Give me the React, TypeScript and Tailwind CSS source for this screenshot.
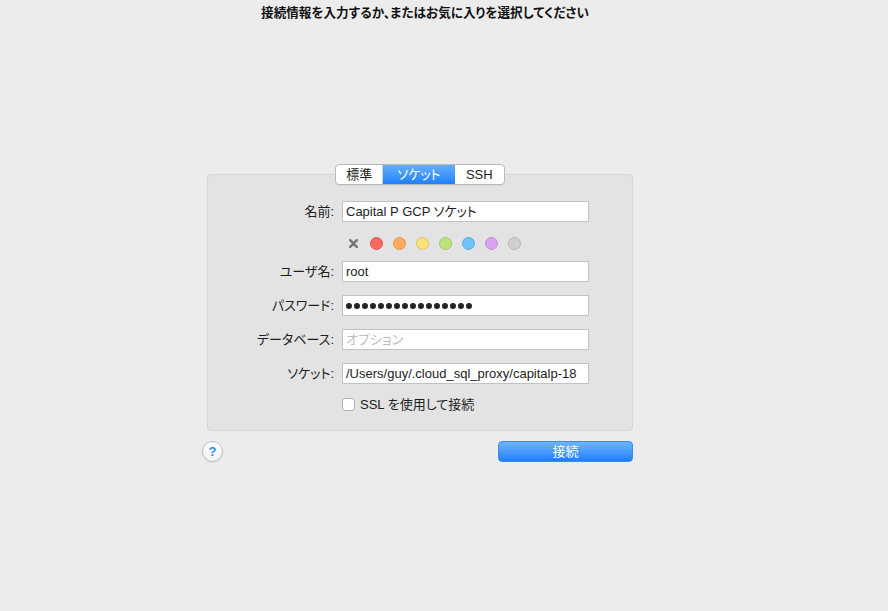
import { useState } from "react";

const FONT = "[font-family:'Liberation_Sans','Noto_Sans_CJK_JP',sans-serif] [font-feature-settings:'palt']";

const favColors = [
  { fill: "bg-[#f86a5f]", ring: "border-[#de554b]" },
  { fill: "bg-[#fdab5e]", ring: "border-[#e3944c]" },
  { fill: "bg-[#fbe27b]", ring: "border-[#dcc563]" },
  { fill: "bg-[#bce37c]", ring: "border-[#a0c766]" },
  { fill: "bg-[#6fc4fb]", ring: "border-[#55abe2]" },
  { fill: "bg-[#daa4f1]", ring: "border-[#c08bd7]" },
  { fill: "bg-[#d0d0d0]", ring: "border-[#b4b4b4]" },
];

const Field = ({ label, children }: { label: string; children: React.ReactNode }) => {
  return (
    <div className="flex items-center">
      <label className="w-[127px] pr-[1px] text-right text-[13px] text-[#1d1d1d]">{label}</label>
      <div className="ml-[7px] flex h-[21px] w-[247px] items-center overflow-hidden whitespace-nowrap border border-[#c3c3c3] bg-white pl-[3px] text-[13px] text-[#1d1d1d]">
        {children}
      </div>
    </div>
  );
};

const App = () => {
  const [tab, setTab] = useState<string>("socket");
  const [ssl, setSsl] = useState<boolean>(false);

  const tabs = [
    { id: "std", label: "標準", w: "w-[48px]" },
    { id: "socket", label: "ソケット", w: "w-[72px]" },
    { id: "ssh", label: "SSH", w: "w-[50px]" },
  ];

  return (
    <div className={`min-h-[611px] w-full bg-[#ececec] ${FONT}`}>
      <div className="w-[850px] pt-[5px] text-center text-[12.6px] font-bold leading-[16px] text-[#111]">
        接続情報を入力するか、またはお気に入りを選択してください
      </div>

      <div className="ml-[202px] mt-[143px] w-[431px]">
        {/* tabs */}
        <div className="relative z-10 ml-[133px] flex h-[21px] w-[170px] overflow-hidden rounded-[4px] border border-[#b9b9b9] bg-white shadow-[0_1px_0_rgba(0,0,0,0.05)]">
          {tabs.map((t) => (
            <button
              key={t.id}
              onClick={() => setTab(t.id)}
              className={
                tab === t.id
                  ? `${t.w} flex items-center justify-center bg-gradient-to-b from-[#63aefa] to-[#1c80fa] text-[13px] text-white`
                  : `${t.w} flex items-center justify-center border-r border-[#d0d0d0] text-[13px] text-[#1d1d1d] last:border-r-0`
              }
            >
              {t.label}
            </button>
          ))}
        </div>

        {/* panel */}
        <div className="-mt-[11px] ml-[5px] w-[426px] rounded-[4px] border border-[#d6d6d6] bg-[#e3e3e3] pb-[19px] pt-[26px]">
          <Field label="名前:">Capital P GCP ソケット</Field>

          <div className="ml-[139px] mt-[15px] flex h-[13px] items-center gap-[10px]">
            <span className="flex h-[13px] w-[13px] items-center justify-center">
              <svg width="9" height="9" viewBox="0 0 9 9">
                <path d="M1.2 1.2 L7.8 7.8 M7.8 1.2 L1.2 7.8" stroke="#767676" strokeWidth="2.4" strokeLinecap="round" />
              </svg>
            </span>
            {favColors.map((c, i) => (
              <span key={i} className={`h-[13px] w-[13px] rounded-full border ${c.fill} ${c.ring}`} />
            ))}
          </div>

          <div className="mt-[11px] flex flex-col gap-[13px]">
            <Field label="ユーザ名:">root</Field>
            <Field label="パスワード:">
              <span className="flex gap-[2px]">
                {Array.from({ length: 16 }).map((_, i) => (
                  <span key={i} className="h-[6px] w-[6px] rounded-full bg-[#222]" />
                ))}
              </span>
            </Field>
            <Field label="データベース:">
              <span className="text-[#bdbdbd]">オプション</span>
            </Field>
            <Field label="ソケット:">/Users/guy/.cloud_sql_proxy/capitalp-18</Field>
          </div>

          <label className="ml-[134px] mt-[14px] flex h-[13px] items-center gap-[5px] text-[13px] leading-none text-[#1d1d1d]">
            <span
              onClick={() => setSsl(!ssl)}
              className="flex h-[13px] w-[13px] items-center justify-center rounded-[3px] border border-[#b3b3b3] bg-white text-[10px] leading-none text-[#1c80fa]"
            >
              {ssl ? "✓" : ""}
            </span>
            SSL を使用して接続
          </label>
        </div>

        {/* bottom row */}
        <div className="mt-[10px] flex items-center justify-between">
          <button className="flex h-[21px] w-[21px] items-center justify-center rounded-full border border-[#bdbdbd] bg-gradient-to-b from-white to-[#f2f2f2] text-[13px] font-bold text-[#2f8af5] shadow-[0_1px_1px_rgba(0,0,0,0.08)]">
            ?
          </button>
          <button className="flex h-[21px] w-[135px] items-center justify-center rounded-[4px] border border-[#3b8cf0] bg-gradient-to-b from-[#6db4fb] to-[#1a7ffa] text-[13px] text-white">
            接続
          </button>
        </div>
      </div>
    </div>
  );
};

export default App;
